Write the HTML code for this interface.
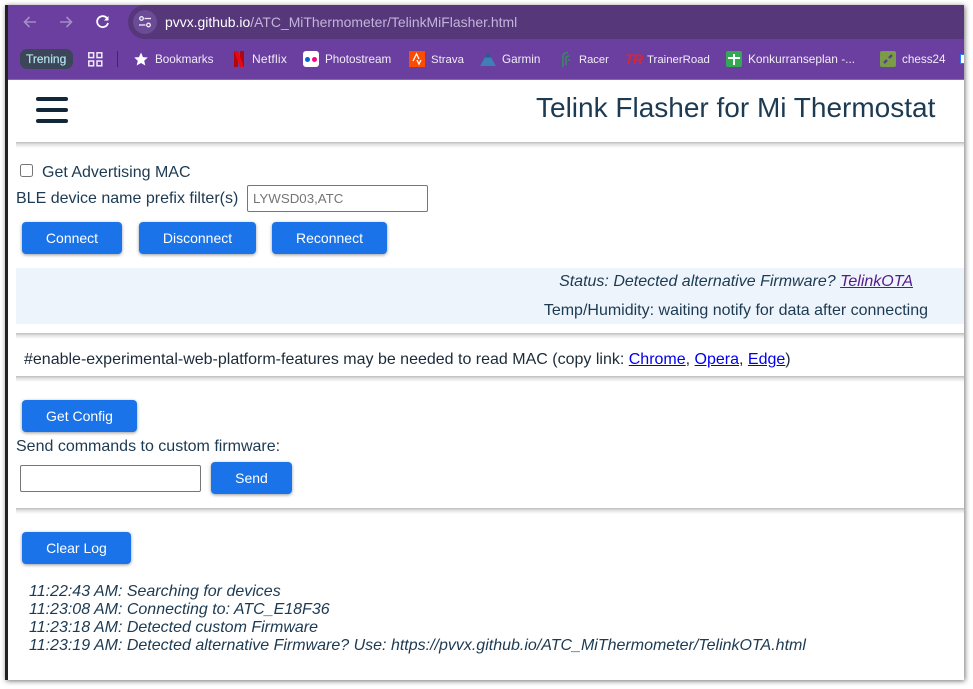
<!DOCTYPE html>
<html>
<head>
<meta charset="utf-8">
<style>
html,body{margin:0;padding:0;width:973px;height:689px;overflow:hidden;background:#fff;font-family:"Liberation Sans",sans-serif}
.a{position:absolute;white-space:nowrap}
#win{position:absolute;left:5px;top:5px;width:959px;height:675px;background:#fff;box-shadow:1px 1px 5px rgba(0,0,0,.55);overflow:hidden}
#dark{position:absolute;left:5px;top:5px;width:3px;height:675px;background:#222}
.bm{position:absolute;top:52px;font-size:11.700px;color:#f1ecf8;line-height:16px;white-space:nowrap}
.ic{position:absolute;top:51px;width:16px;height:16px}
.t{position:absolute;white-space:nowrap;color:#1c3a52;font-size:16px;line-height:20px}
.b{position:absolute;background:#1a73e8;color:#fff;font-size:14px;text-align:center;border-radius:4px;height:32px;line-height:32px;box-shadow:0 1px 3px rgba(0,0,0,.4)}
.s{position:absolute;left:16px;width:948px;height:6px;background:linear-gradient(#bcbcbc,#e2e2e2 40%,#fff)}
a{color:#00e}
</style>
</head>
<body>
<div id="win"></div>
<div class="a" style="left:8px;top:5px;width:956px;height:34px;background:#6b3fa0"></div>
<div class="a" style="left:128px;top:5px;width:836px;height:34px;background:#55377a;border-radius:17px 0 0 17px"></div>
<div class="a" style="left:8px;top:39px;width:956px;height:40px;background:#6b3fa0"></div>
<div class="a" style="left:8px;top:79px;width:956px;height:1px;background:#8a66b5"></div>
<div id="dark"></div>

<svg class="a" style="left:20px;top:12px" width="100" height="20" fill="none" stroke-width="1.6">
<path d="M16 10H5M9.5 5L4.5 10L9.500 15" stroke="#a58cc6"/>
<path d="M40 10H51M46.500 5L51.500 10L46.500 15" stroke="#a58cc6"/>
<path d="M87.500 7A5.500 5.500 0 1 0 88 11" stroke="#fff" stroke-width="1.800"/>
<path d="M88.500 4V8.500H84Z" fill="#fff" stroke="none"/>
</svg>
<div class="a" style="left:133px;top:10px;width:24px;height:24px;border-radius:50%;background:#6b4a96"></div>
<svg class="a" style="left:138px;top:16px" width="14" height="12" fill="none" stroke="#f0eaf8" stroke-width="1.300">
<circle cx="3.500" cy="2.500" r="1.800"/><path d="M6.500 2.500H13"/>
<circle cx="10.500" cy="9" r="1.800"/><path d="M1 9H7.500"/>
</svg>
<div class="a" style="left:165px;top:14px;font-size:13.950px;line-height:17px;color:#fff">pvvx.github.io<span style="color:#c4b3da">/ATC_MiThermometer/TelinkMiFlasher.html</span></div>

<div class="a" style="left:20px;top:49px;width:53px;height:20px;border-radius:7px;background:#3c4658"></div>
<div class="a" style="left:26px;top:51px;font-size:12px;line-height:16px;color:#b5e2ee;font-weight:500;-webkit-text-stroke:.2px #b5e2ee">Trening</div>
<svg class="a" style="left:88px;top:52px" width="15" height="15" fill="none" stroke="#f1ecf8" stroke-width="1.500">
<rect x=".8" y=".8" width="4.800" height="4.800"/><rect x="9" y=".8" width="4.800" height="4.800"/>
<rect x=".8" y="9" width="4.800" height="4.800"/><rect x="9" y="9" width="4.800" height="4.800"/>
</svg>
<div class="a" style="left:117px;top:51px;width:1px;height:16px;background:#3b2a5c"></div>
<svg class="a" style="left:134px;top:52px" width="14" height="14"><path d="M7 .5L9 5.100L13.800 5.500L10.200 8.700L11.300 13.500L7 11L2.700 13.500L3.800 8.700L.2 5.500L5 5.100Z" fill="#fff"/></svg>
<div class="bm" style="left:155px">Bookmarks</div>
<svg class="ic" style="left:232px"><rect x="2" y="0" width="4" height="16" fill="#b1060f"/><rect x="8" y="0" width="4" height="16" fill="#b1060f"/><path d="M2 0H6L12 16H8Z" fill="#e50914"/></svg>
<div class="bm" style="left:252px;top:51px;font-size:12px;letter-spacing:.25px">Netflix</div>
<div class="ic" style="left:303px;background:#fff;border-radius:3px"></div>
<div class="a" style="left:305px;top:57px;width:5px;height:5px;border-radius:50%;background:#0063dc"></div>
<div class="a" style="left:312px;top:57px;width:5px;height:5px;border-radius:50%;background:#ff0084"></div>
<div class="bm" style="left:325px">Photostream</div>
<svg class="ic" style="left:409px"><rect width="16" height="16" fill="#fc4c02"/><path d="M4 10L7.500 3L10 8M8 9L10 13L12 9" fill="none" stroke="#fff" stroke-width="1.300"/></svg>
<div class="bm" style="left:431px;font-size:11.400px">Strava</div>
<svg class="ic" style="left:480px"><path d="M8 1L16 15H0Z" fill="#3f7fb5"/><path d="M8 1L11 6.500H5Z" fill="#2a5a8a"/></svg>
<div class="bm" style="left:502px">Garmin</div>
<svg class="ic" style="left:558px" fill="none" stroke="#2f8f5a" stroke-width="1.500"><path d="M5 16V5Q5 2 10 1.500M8 14V7Q8 5 11 5"/><circle cx="11" cy="9" r="1" fill="#2f8f5a" stroke="none"/></svg>
<div class="bm" style="left:579px;font-size:11.200px">Racer</div>
<div class="a" style="left:625px;top:51px;font-size:14px;line-height:16px;font-weight:bold;font-style:italic;color:#e0242a;letter-spacing:-.5px">TR</div>
<div class="bm" style="left:647px;font-size:11.400px">TrainerRoad</div>
<svg class="ic" style="left:726px"><rect width="16" height="16" rx="2" fill="#34a853"/><path d="M2 7H14M8 3V14" stroke="#fff" stroke-width="2"/></svg>
<div class="bm" style="left:748px;top:51px;font-size:11.900px">Konkurranseplan -...</div>
<svg class="ic" style="left:880px"><rect width="16" height="16" rx="2" fill="#7a9c48"/><path d="M4 12L7 9M9 7L12 4" stroke="#5a3e8c" stroke-width="2.500"/></svg>
<div class="bm" style="left:902px">chess24</div>
<div class="a" style="left:960px;top:54px;width:4px;height:10px;border:1px solid #2979ff;border-right:0;background:#fff;box-sizing:border-box"></div>

<div class="a" style="left:36px;top:97px;width:32px;height:4px;background:#12283a;border-radius:2px"></div>
<div class="a" style="left:36px;top:108px;width:32px;height:4px;background:#12283a;border-radius:2px"></div>
<div class="a" style="left:36px;top:119px;width:32px;height:4px;background:#12283a;border-radius:2px"></div>
<div class="a" style="left:536px;top:91px;font-size:28px;line-height:34px;color:#1c3a52">Telink Flasher for Mi Thermostat</div>
<div class="s" style="top:142px"></div>

<div class="a" style="left:20px;top:164px;width:13px;height:13px;border:1px solid #767676;border-radius:2.500px;box-sizing:border-box;background:#fff"></div>
<div class="t" style="left:42px;top:163px">Get Advertising MAC</div>
<div class="t" style="left:16px;top:189px">BLE device name prefix filter(s)</div>
<div class="a" style="left:247px;top:185px;width:181px;height:27px;border:1px solid #767676;border-radius:2px;box-sizing:border-box;background:#fff;font-size:13.300px;line-height:25px;color:#757575;padding-left:5px">LYWSD03,ATC</div>
<div class="b" style="left:22px;top:222px;width:100px">Connect</div>
<div class="b" style="left:139px;top:222px;width:117px">Disconnect</div>
<div class="b" style="left:272px;top:222px;width:115px">Reconnect</div>

<div class="a" style="left:16px;top:268px;width:948px;height:56px;background:#eef4fb"></div>
<div class="t" style="right:60px;top:272px;font-style:italic">Status: Detected alternative Firmware? <a href="#" style="color:#551a8b">TelinkOTA</a></div>
<div class="t" style="right:45px;top:301px">Temp/Humidity: waiting notify for data after connecting</div>
<div class="s" style="top:333px"></div>

<div class="t" style="left:24px;top:350px;color:#1c2b3a">#enable-experimental-web-platform-features may be needed to read MAC (copy link: <a href="#">Chrome</a>, <a href="#">Opera</a>, <a href="#">Edge</a>)</div>
<div class="s" style="top:376px"></div>

<div class="b" style="left:22px;top:400px;width:115px">Get Config</div>
<div class="t" style="left:16px;top:437px">Send commands to custom firmware:</div>
<div class="a" style="left:20px;top:465px;width:181px;height:27px;border:1px solid #767676;border-radius:2px;box-sizing:border-box;background:#fff"></div>
<div class="b" style="left:211px;top:462px;width:81px">Send</div>
<div class="s" style="top:508px"></div>

<div class="b" style="left:22px;top:532px;width:109px">Clear Log</div>
<div class="t" style="left:29px;top:583px;font-style:italic;line-height:18px">11:22:43 AM: Searching for devices<br>11:23:08 AM: Connecting to: ATC_E18F36<br>11:23:18 AM: Detected custom Firmware<br>11:23:19 AM: Detected alternative Firmware? Use: https://pvvx.github.io/ATC_MiThermometer/TelinkOTA.html</div>
</body>
</html>
